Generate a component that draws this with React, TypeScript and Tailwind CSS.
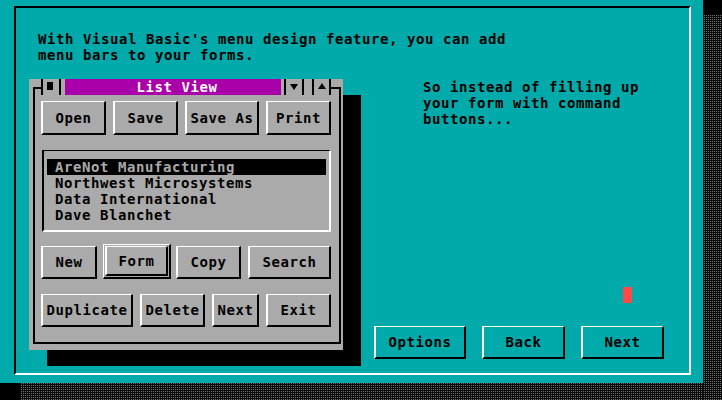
import React from 'react';

// DOS-style 3D button: light top/left, dark right/bottom
const DosButton = ({ label, cls }: { label: string; cls: string }) => (
  <div
    className={`flex items-center justify-center border-t border-l-2 border-r-2 border-b-2 border-t-white border-l-white border-r-black border-b-black text-black ${cls}`}
  >
    {label}
  </div>
);

const DefaultButton = ({ label, cls }: { label: string; cls: string }) => (
  <div className={`flex border-t border-l border-r-2 border-b-2 border-t-white border-l-white border-r-black border-b-black p-px ${cls}`}>
    <div className="flex-1 flex items-center justify-center border-t border-l-2 border-r-2 border-b-2 border-t-white border-l-white border-r-black border-b-black text-black">
      {label}
    </div>
  </div>
);

const customers = ['AreNot Manufacturing', 'Northwest Microsystems', 'Data International', 'Dave Blanchet'];

const ListViewWindow = () => (
  <div className="w-[314px] h-[271px] shrink-0 bg-[#aaaaaa] shadow-[18px_16px_0_0_#000] flex flex-col pl-[4px] pr-[2px] pb-[6px]">
    {/* title bar */}
    <div className="flex h-[16px] shrink-0">
      <div className="w-[8px] h-[8px] mt-[8px] border-l-2 border-t-2 border-black" />
      <div className="w-[2px] bg-black" />
      <div className="ml-[4px] mt-[3px] w-[6px] h-[8px] bg-black" />
      <div className="ml-[6px] w-[2px] bg-black" />
      <div className="ml-[4px] w-[216px] bg-[#aa00aa] text-white flex items-center justify-center pl-[8px]">List View</div>
      <div className="ml-[3px] w-[2px] bg-black" />
      <div className="w-[16px] flex justify-center pt-[5px]">
        <svg width="8" height="6" viewBox="0 0 8 6"><polygon points="0,0 8,0 4,6" fill="#000" /></svg>
      </div>
      <div className="w-[2px] bg-black" />
      <div className="ml-[8px] w-[2px] bg-black" />
      <div className="w-[15px] flex justify-center pt-[4px]">
        <svg width="8" height="6" viewBox="0 0 8 6"><polygon points="4,0 8,6 0,6" fill="#000" /></svg>
      </div>
      <div className="w-[2px] bg-black" />
      <div className="w-[10px] h-[8px] mt-[8px] border-t-2 border-r-2 border-black" />
    </div>

    {/* window body */}
    <div className="flex-1 flex flex-col border-l-2 border-r-2 border-b-2 border-black pl-[6px] pt-[6px]">
      <div className="flex gap-[7px] h-[34px]">
        <DosButton label="Open" cls="w-[65px]" />
        <DosButton label="Save" cls="w-[65px]" />
        <DosButton label="Save As" cls="w-[74px]" />
        <DosButton label="Print" cls="w-[65px]" />
      </div>

      <div className="ml-px mt-[15px] w-[289px] h-[82px] border-t border-l-2 border-r-2 border-b-2 border-t-black border-l-black border-r-white border-b-white px-[3px] pt-[8px]">
        {customers.map((c, i) => (
          <div
            key={c}
            className={`h-[16px] pl-[8px] whitespace-pre ${i === 0 ? 'bg-black text-[#aaaaaa]' : 'text-black'}`}
          >
            {c}
          </div>
        ))}
      </div>

      <div className="flex items-end mt-[12px] h-[35px]">
        <DosButton label="New" cls="w-[56px] h-[33px]" />
        <DefaultButton label="Form" cls="ml-[6px] w-[68px] h-[35px]" />
        <DosButton label="Copy" cls="ml-[5px] w-[65px] h-[33px]" />
        <DosButton label="Search" cls="ml-[7px] w-[83px] h-[33px]" />
      </div>

      <div className="flex gap-[7px] mt-[15px] h-[33px]">
        <DosButton label="Duplicate" cls="w-[92px]" />
        <DosButton label="Delete" cls="w-[65px]" />
        <DosButton label="Next" cls="w-[47px]" />
        <DosButton label="Exit" cls="w-[65px]" />
      </div>
    </div>
  </div>
);

const dither = 'bg-[conic-gradient(#6e6e6e_25%,#0b0b0b_0)] bg-[length:2px_2px]';

export default function App() {
  return (
    <div className="w-[722px] h-[400px] flex bg-black overflow-hidden font-['DejaVu_Sans_Mono','Liberation_Mono',monospace] font-bold text-[14px] tracking-[0.57px] leading-[16px] text-black">
      <div className="w-[703px] flex flex-col">
        <div className="h-[383px] bg-[#00aaaa] pl-[14px] pt-[6px]">
          <div className="w-[677px] h-[369px] border-2 border-t-black border-l-black border-r-white border-b-white flex flex-col">
            <p className="ml-[22px] mt-[23px] whitespace-pre">
              {"With Visual Basic's menu design feature, you can add\nmenu bars to your forms."}
            </p>

            <div className="flex mt-[16px]">
              <div className="ml-[13px]">
                <ListViewWindow />
              </div>

              <div className="flex-1 flex flex-col">
                <p className="ml-[80px] whitespace-pre">
                  {'So instead of filling up\nyour form with command\nbuttons...'}
                </p>
                <div className="ml-[280px] mt-[160px] w-[9px] h-[16px] bg-[#ff4848]" />
                <div className="flex gap-[16px] ml-[31px] mt-[23px] h-[33px]">
                  <DosButton label="Options" cls="w-[92px]" />
                  <DosButton label="Back" cls="w-[83px]" />
                  <DosButton label="Next" cls="w-[83px]" />
                </div>
              </div>
            </div>
          </div>
        </div>
        <div className="flex h-[17px]">
          <div className="w-[20px] bg-black" />
          <div className={`flex-1 ${dither}`} />
        </div>
      </div>
      <div className="w-[19px] flex flex-col">
        <div className="h-[15px] bg-black" />
        <div className={`flex-1 ${dither}`} />
      </div>
    </div>
  );
}
